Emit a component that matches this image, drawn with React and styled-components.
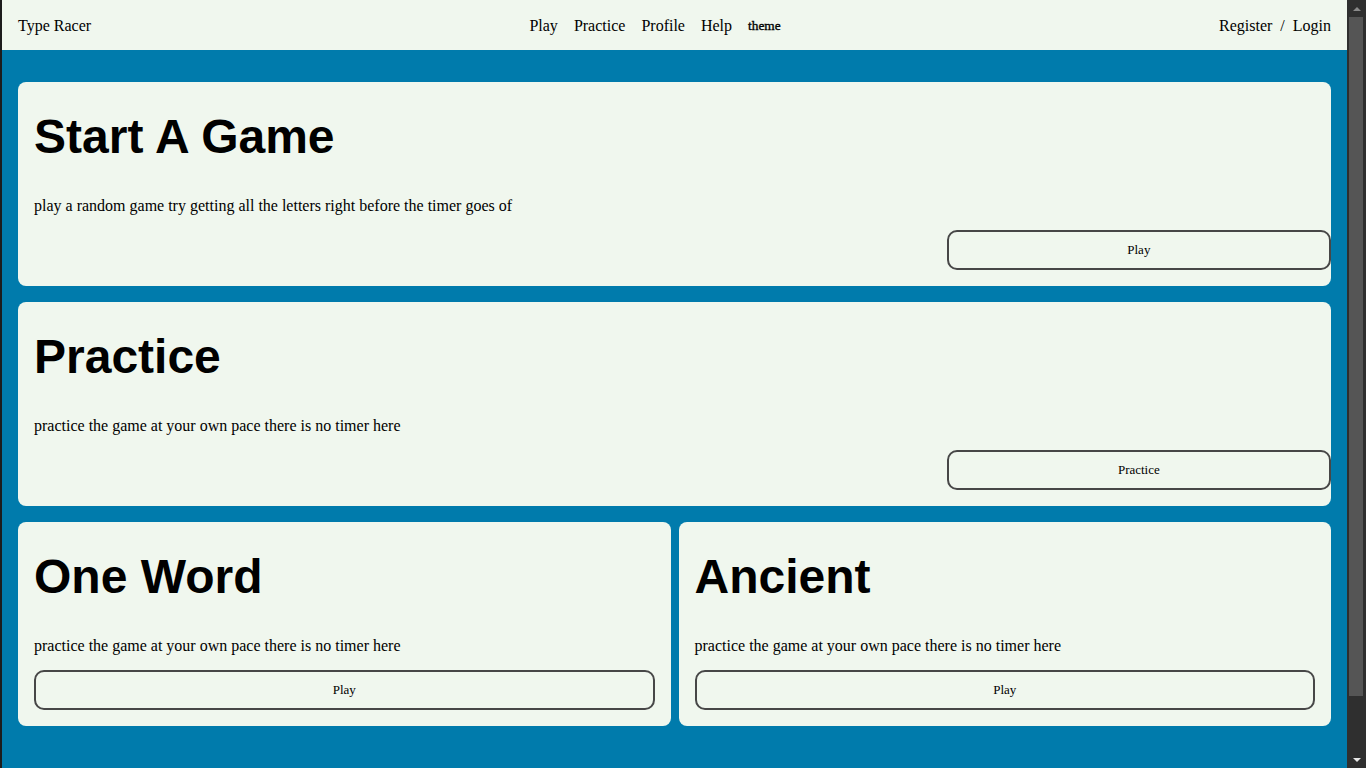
import React from "react";
import styled, { createGlobalStyle } from "styled-components";

const GlobalStyle = createGlobalStyle`
  html, body {
    margin: 0;
    height: 100%;
    overflow: hidden;
    background: #007bac;
  }
  body {
    font-family: "Liberation Serif", "Times New Roman", serif;
    color: #000;
  }
  * { box-sizing: border-box; }
`;

const Shell = styled.div`
  height: 100vh;
  display: flex;
  border-left: 2px solid #1c1c1c;
`;

const Viewport = styled.div`
  flex: 1;
  min-width: 0;
  overflow: hidden;
  background: #007bac;
`;

const ScrollBar = styled.div`
  width: 19px;
  flex: none;
  display: flex;
  flex-direction: column;
  background: #2f2f2f;
`;

const ArrowButton = styled.div`
  height: 17px;
  display: flex;
  align-items: center;
  justify-content: center;
  &::before {
    content: "";
    width: 0;
    height: 0;
    border-left: 4px solid transparent;
    border-right: 4px solid transparent;
    ${(p) =>
      p.$down
        ? "border-top: 4px solid #e8e8e8;"
        : "border-bottom: 4px solid #8a8a8a;"}
  }
`;

const Track = styled.div`
  flex: 1;
  display: flex;
  flex-direction: column;
  padding: 0 3px 0 2px;
`;

const Thumb = styled.div`
  background: #555555;
`;

const NavBar = styled.nav`
  height: 50px;
  background: #f0f7ee;
  display: flex;
  align-items: center;
  justify-content: space-between;
  padding: 1px 16px 0;
  font-size: 16px;
`;

const Brand = styled.span`
  font-size: 16px;
`;

const NavLinks = styled.div`
  display: flex;
  align-items: center;
  gap: 16px;
`;

const NavLink = styled.span`
  font-size: 16px;
`;

const ThemeToggle = styled.span`
  font-size: 13.33px;
  font-weight: normal;
  -webkit-text-stroke: 0.35px #000;
`;

const AuthLinks = styled.div`
  display: flex;
  align-items: center;
  gap: 8px;
`;

const Main = styled.main`
  padding: 32px 16px 16px;
  display: flex;
  flex-direction: column;
  gap: 16px;
`;

const Row = styled.div`
  display: grid;
  grid-template-columns: repeat(${(p) => p.$cols || 1}, 1fr);
  gap: 8px;
`;

const Card = styled.section`
  background: #f0f7ee;
  border-radius: 8px;
  padding: 16px;
  display: flex;
  flex-direction: column;
  height: 204px;
`;

const Title = styled.h1`
  margin: 12px 0 0;
  font-family: "Liberation Sans", Arial, sans-serif;
  font-weight: bold;
  font-size: 48px;
  line-height: 54px;
`;

const Desc = styled.p`
  margin: 33px 0 0;
  font-size: 16px;
  line-height: 18px;
`;

const Button = styled.button`
  margin-top: auto;
  height: 40px;
  border: 2px solid #474747;
  border-radius: 10px;
  background: transparent;
  font-family: "Liberation Serif", "Times New Roman", serif;
  font-size: 13px;
  color: #000;
  align-self: ${(p) => (p.$compact ? "flex-end" : "stretch")};
  width: ${(p) => (p.$compact ? "30%" : "auto")};
  margin-right: ${(p) => (p.$compact ? "-16px" : "0")};
`;

function GameCard({ title, desc, action, compact }) {
  return (
    <Card>
      <Title>{title}</Title>
      <Desc>{desc}</Desc>
      <Button $compact={compact}>{action}</Button>
    </Card>
  );
}

export default function App() {
  const pace = "practice the game at your own pace there is no timer here";
  return (
    <>
      <GlobalStyle />
      <Shell>
        <Viewport>
          <NavBar>
            <Brand>Type Racer</Brand>
            <NavLinks>
              <NavLink>Play</NavLink>
              <NavLink>Practice</NavLink>
              <NavLink>Profile</NavLink>
              <NavLink>Help</NavLink>
              <ThemeToggle>theme</ThemeToggle>
            </NavLinks>
            <AuthLinks>
              <NavLink>Register</NavLink>
              <NavLink>/</NavLink>
              <NavLink>Login</NavLink>
            </AuthLinks>
          </NavBar>
          <Main>
            <Row>
              <GameCard
                compact
                title="Start A Game"
                desc="play a random game try getting all the letters right before the timer goes of"
                action="Play"
              />
            </Row>
            <Row>
              <GameCard compact title="Practice" desc={pace} action="Practice" />
            </Row>
            <Row $cols={2}>
              <GameCard title="One Word" desc={pace} action="Play" />
              <GameCard title="Ancient" desc={pace} action="Play" />
            </Row>
          </Main>
        </Viewport>
        <ScrollBar>
          <ArrowButton />
          <Track>
            <Thumb style={{ height: `${(679 / 734) * 100}%` }} />
          </Track>
          <ArrowButton $down />
        </ScrollBar>
      </Shell>
    </>
  );
}
